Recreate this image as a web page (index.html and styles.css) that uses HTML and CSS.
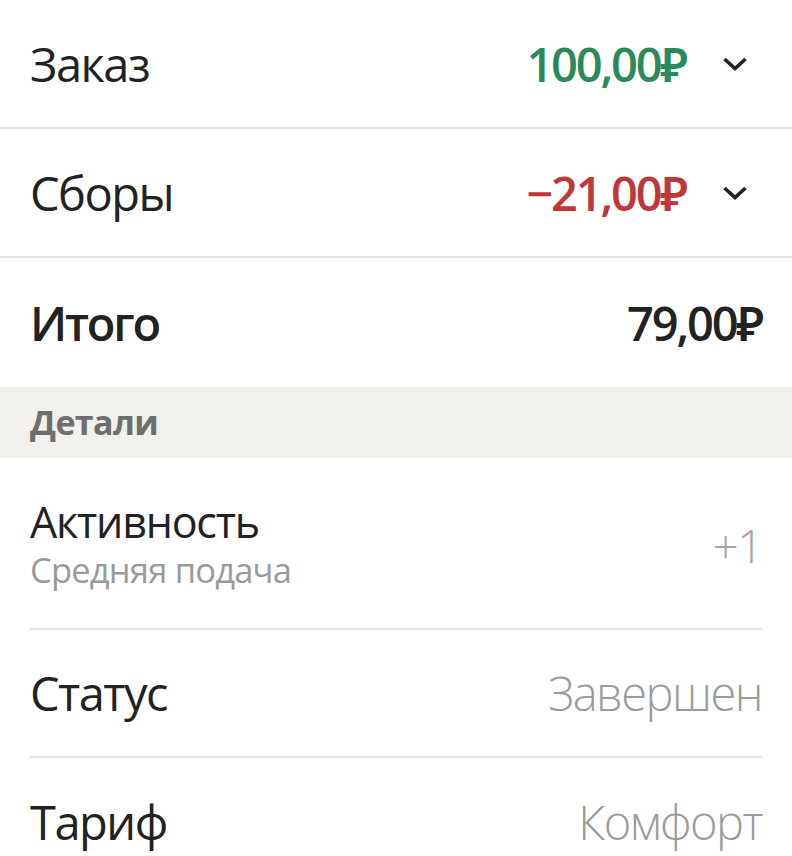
FILE: index.html
```html
<!DOCTYPE html>
<html lang="ru">
 <head>
  <title>Детали заказа</title>
  <meta charset="utf-8"/>
  <link rel="stylesheet" href="styles.css">
 </head>
 <body>
	<div id="wrap">
		<div class="sum">
			<div class="row big">
				<span class="label">Заказ</span>
				<span class="amount plus">100,00₽</span>
				<svg class="chev" viewBox="0 0 26 16" width="26" height="16"><path d="M2.5 3l10.5 9.5 10.5-9.5" fill="none" stroke="#222" stroke-width="3.6"/></svg>
			</div>
			<div class="row big">
				<span class="label">Сборы</span>
				<span class="amount minus">−21,00₽</span>
				<svg class="chev" viewBox="0 0 26 16" width="26" height="16"><path d="M2.5 3l10.5 9.5 10.5-9.5" fill="none" stroke="#222" stroke-width="3.6"/></svg>
			</div>
			<div class="row big total">
				<span class="label">Итого</span>
				<span class="amount">79,00₽</span>
			</div>
		</div>

		<h3>Детали</h3>

		<div class="details">
			<div class="item two">
				<div class="name">
					<span class="title">Активность</span>
					<span class="sub">Средняя подача</span>
				</div>
				<span class="val plus1">+1</span>
			</div>
			<div class="item">
				<span class="label">Статус</span>
				<span class="val">Завершен</span>
			</div>
			<div class="item">
				<span class="label">Тариф</span>
				<span class="val">Комфорт</span>
			</div>
		</div>
	</div>
 </body>
</html>
```

FILE: styles.css
```css
*{margin:0; padding:0; box-sizing:border-box;}
body{background:#fff; font-family:"Open Sans", "Noto Sans", sans-serif; color:#222;}
#wrap{width:792px;}

/* верхний блок с суммами */
.row{display:flex; align-items:center; height:129px; padding:0 30px; border-bottom:2px solid #e4e4e4;}
.row:last-child{border-bottom:none; height:129px;}
.row .label{flex:1; font-size:47px; letter-spacing:-1.5px;}
.amount{font-size:47px; letter-spacing:-2.2px; font-weight:600;}
.plus{color:#2b8a5b;}
.minus{color:#c0373a;}
.chev{margin-left:36px; margin-right:14px;}
.total .label{font-weight:600; letter-spacing:-2.2px;}

h3{background:#f1f0ed; height:71px; line-height:71px; padding:0 30px; font-size:34px; color:#6e6e6e; font-weight:700; letter-spacing:-0.6px;}

/* детали */
.details{padding:0 30px 0 30px;}
.item{display:flex; align-items:center; height:128px; border-bottom:2px solid #e3e3e3;}
.item:last-child{border-bottom:none;}
.item.two{height:172px; padding-top:4px;}
.item .label{flex:1; font-size:47px; letter-spacing:-1.5px;}
.name{flex:1; display:flex; flex-direction:column;}
.title{font-size:43px; letter-spacing:-1.2px; line-height:50px;}
.sub{font-size:34.5px; color:#9a9a9a; letter-spacing:-0.8px; line-height:46px;}
.val{font-size:47px; color:#9b9b9b; letter-spacing:-1.5px; font-weight:300;}
.plus1{font-size:46px; color:#a5a5a5;}
```
